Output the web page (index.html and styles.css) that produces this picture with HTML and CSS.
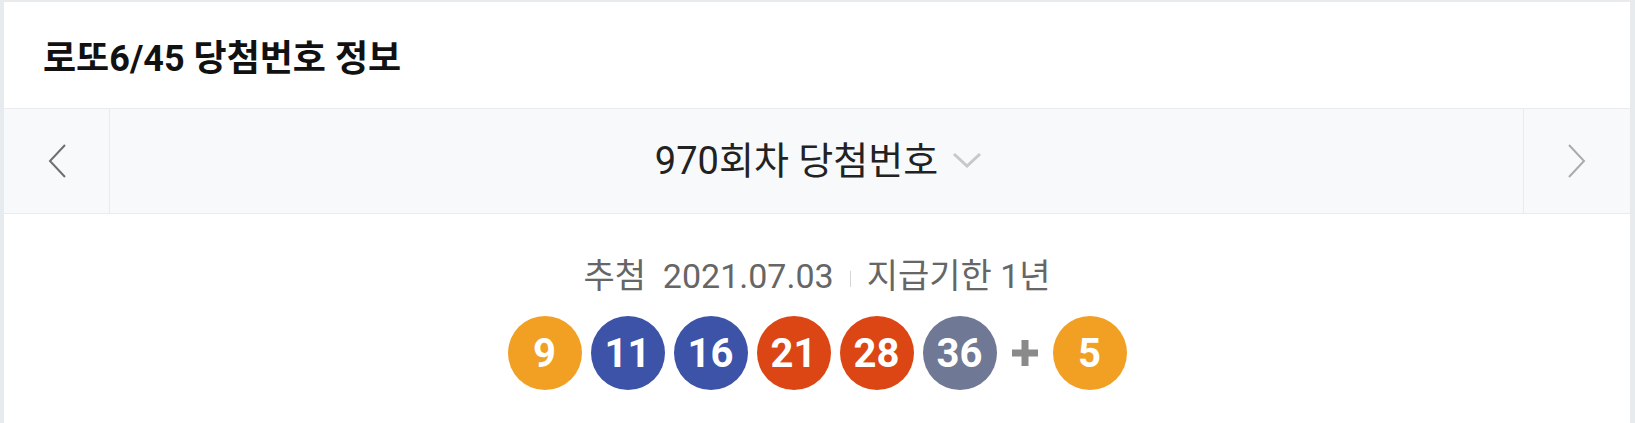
FILE: index.html
```html
<!DOCTYPE html>
<html lang="ko">
<head>
  <meta charset="UTF-8">
  <meta name="viewport" content="width=device-width, initial-scale=1.0">
  <title>로또6/45 당첨번호 정보</title>
  <link rel="stylesheet" href="styles.css">
</head>
<body>

  <section class="lotto-card">
    <h2 class="card-title">로또6/45 당첨번호 정보</h2>

    <div class="round-nav">
      <button class="nav-btn prev" aria-label="이전 회차">
        <svg width="20" height="36" viewBox="0 0 20 36"><path d="M18 2 L3 18 L18 34" fill="none" stroke="#6e6e6e" stroke-width="2"/></svg>
      </button>
      <div class="round-select">
        <span>970회차 당첨번호</span>
        <svg width="30" height="18" viewBox="0 0 30 18"><path d="M2 3 L15 15 L28 3" fill="none" stroke="#c8c8c8" stroke-width="3"/></svg>
      </div>
      <button class="nav-btn next" aria-label="다음 회차">
        <svg width="20" height="36" viewBox="0 0 20 36"><path d="M2 2 L17 18 L2 34" fill="none" stroke="#ababab" stroke-width="2"/></svg>
      </button>
    </div>

    <div class="result">
      <p class="draw-info">
        <span>추첨&nbsp; 2021.07.03</span>
        <span class="divider"></span>
        <span>지급기한 1년</span>
      </p>
      <div class="balls">
        <span class="ball yellow">9</span>
        <span class="ball blue">11</span>
        <span class="ball blue">16</span>
        <span class="ball red">21</span>
        <span class="ball red">28</span>
        <span class="ball gray">36</span>
        <span class="plus">
          <svg width="30" height="30" viewBox="0 0 30 30"><path d="M15 2 V28 M2 15 H28" stroke="#8a8a8a" stroke-width="7"/></svg>
        </span>
        <span class="ball yellow">5</span>
      </div>
    </div>
  </section>

</body>
</html>
```

FILE: styles.css
```css
/* General Styles */
* {
  margin: 0;
  padding: 0;
  box-sizing: border-box;
  font-family: Roboto, "Noto Sans CJK KR", sans-serif;
}

body {
  background-color: #e8ebee;
  padding: 2px 5px 0 4px;
  height: 423px;
  overflow: hidden;
}

.lotto-card {
  background-color: white;
  height: 100%;
}

.card-title {
  height: 107px;
  display: flex;
  align-items: center;
  padding-left: 39px;
  font-size: 36px;
  font-weight: bold;
  color: #111;
  border-bottom: 1px solid #e9ebee;
}

/* Round navigation */
.round-nav {
  display: flex;
  height: 105px;
  background-color: #f8f9fa;
  border-bottom: 1px solid #e9ebee;
}

.nav-btn {
  width: 106px;
  border: none;
  background: none;
  display: flex;
  align-items: center;
  justify-content: center;
}

.nav-btn.prev {
  border-right: 1px solid #e9ebee;
}

.nav-btn.next {
  border-left: 1px solid #e9ebee;
  width: 107px;
}

.round-select {
  flex: 1;
  display: flex;
  align-items: center;
  justify-content: center;
  gap: 14px;
  font-size: 38px;
  color: #222;
  padding-left: 4px;
  padding-bottom: 8px;
}

.round-select svg {
  margin-top: 6px;
}

/* Result */
.result {
  padding-top: 37px;
  display: flex;
  flex-direction: column;
  align-items: center;
}

.draw-info {
  display: flex;
  align-items: center;
  gap: 16px;
  font-size: 34px;
  color: #666;
  line-height: 50px;
}

.divider {
  width: 1px;
  height: 16px;
  background-color: #d6d6d6;
  margin-top: 6px;
}

.balls {
  display: flex;
  align-items: center;
  gap: 9px;
  margin-top: 15px;
}

.ball {
  width: 74px;
  height: 74px;
  border-radius: 50%;
  display: flex;
  align-items: center;
  justify-content: center;
  color: white;
  font-size: 40px;
  font-weight: bold;
}

.yellow { background-color: #f1a024; }
.blue { background-color: #3d53a8; }
.red { background-color: #dc4614; }
.gray { background-color: #6f7894; }

.plus {
  display: flex;
  margin: 0 4px;
}
```
